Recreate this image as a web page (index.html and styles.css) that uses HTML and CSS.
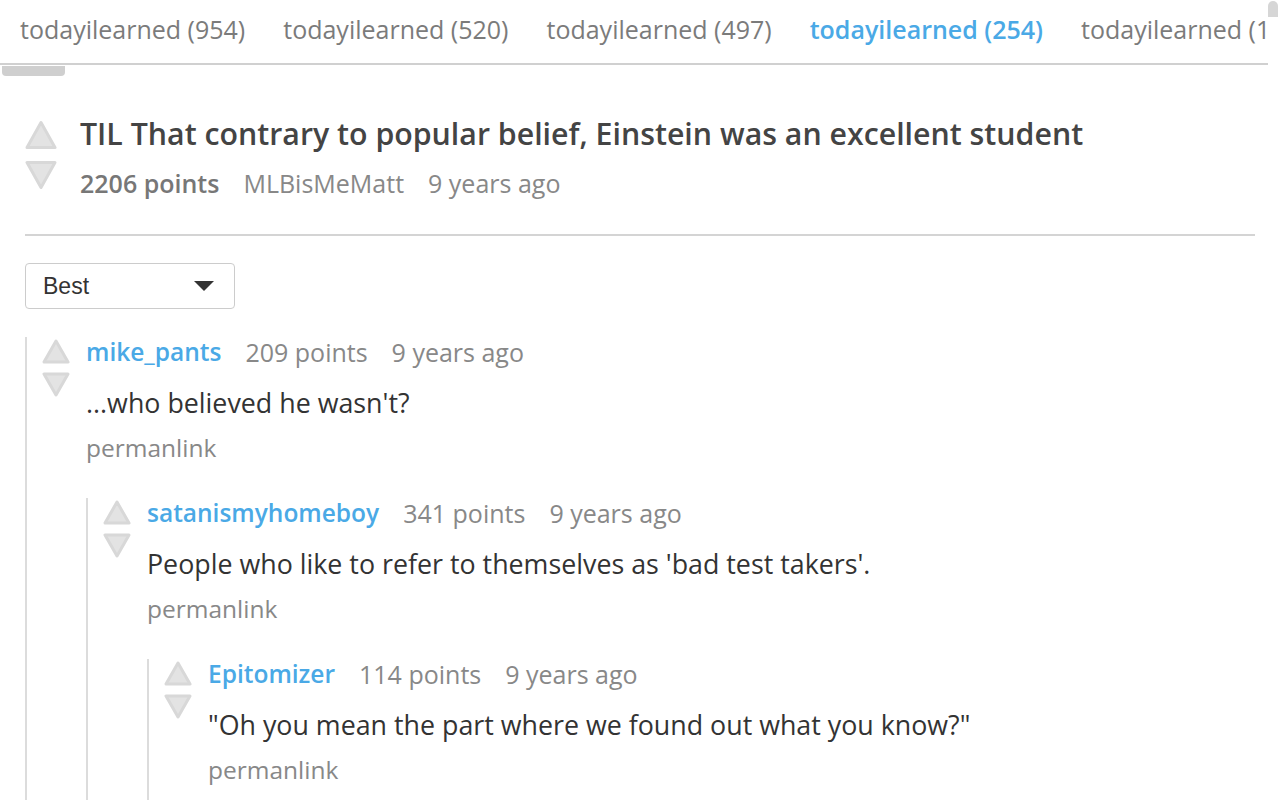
FILE: index.html
```html
<!DOCTYPE html>
<html>
<head>
<meta charset="utf-8">
<link rel="stylesheet" href="styles.css">
</head>
<body>
<div class="page">
  <div class="main">
    <nav class="tabs">
      <span class="tab">todayilearned (954)</span>
      <span class="tab">todayilearned (520)</span>
      <span class="tab">todayilearned (497)</span>
      <span class="tab active">todayilearned (254)</span>
      <span class="tab">todayilearned (154)</span>
    </nav>
    <div class="hscroll"><div class="hthumb"></div></div>

    <div class="content">
      <article class="post">
        <div class="votes post-votes">
          <svg class="arrow" viewBox="0 0 32 30"><polygon points="16,2.5 30,27.5 2,27.5"/></svg>
          <svg class="arrow" viewBox="0 0 32 30"><polygon points="2,2.5 30,2.5 16,27.5"/></svg>
        </div>
        <div class="post-main">
          <h1 class="post-title">TIL That contrary to popular belief, Einstein was an excellent student</h1>
          <div class="post-meta">
            <span class="points">2206 points</span>
            <span>MLBisMeMatt</span>
            <span>9 years ago</span>
          </div>
        </div>
      </article>

      <hr class="divider">

      <div class="sort">
        <span class="sort-label">Best</span>
        <svg class="caret" viewBox="0 0 20 10"><polygon points="0,0 20,0 10,10"/></svg>
      </div>

      <div class="comments">
        <div class="comment">
          <div class="votes">
            <svg class="arrow" viewBox="0 0 28 25"><polygon points="14,2 26,23 2,23"/></svg>
            <svg class="arrow" viewBox="0 0 28 25"><polygon points="2,2 26,2 14,23"/></svg>
          </div>
          <div class="comment-body">
            <div class="comment-head"><span class="author">mike_pants</span><span>209 points</span><span>9 years ago</span></div>
            <p class="comment-text">...who believed he wasn't?</p>
            <a class="permalink">permanlink</a>

            <div class="comment child">
              <div class="votes">
                <svg class="arrow" viewBox="0 0 28 25"><polygon points="14,2 26,23 2,23"/></svg>
                <svg class="arrow" viewBox="0 0 28 25"><polygon points="2,2 26,2 14,23"/></svg>
              </div>
              <div class="comment-body">
                <div class="comment-head"><span class="author">satanismyhomeboy</span><span>341 points</span><span>9 years ago</span></div>
                <p class="comment-text">People who like to refer to themselves as 'bad test takers'.</p>
                <a class="permalink">permanlink</a>

                <div class="comment child">
                  <div class="votes">
                    <svg class="arrow" viewBox="0 0 28 25"><polygon points="14,2 26,23 2,23"/></svg>
                    <svg class="arrow" viewBox="0 0 28 25"><polygon points="2,2 26,2 14,23"/></svg>
                  </div>
                  <div class="comment-body">
                    <div class="comment-head"><span class="author">Epitomizer</span><span>114 points</span><span>9 years ago</span></div>
                    <p class="comment-text">"Oh you mean the part where we found out what you know?"</p>
                    <a class="permalink">permanlink</a>
                  </div>
                </div>
              </div>
            </div>
          </div>
        </div>
      </div>
    </div>
  </div>
  <div class="vscroll"><div class="vthumb"></div></div>
</div>
</body>
</html>
```

FILE: styles.css
```css
html, body {
  margin: 0;
  padding: 0;
  height: 100%;
  overflow: hidden;
  background: #fff;
}
body {
  font-family: "Open Sans", "Noto Sans", sans-serif;
  color: #333;
}
.page {
  display: flex;
  height: 800px;
  overflow: hidden;
}
.main {
  flex: 1;
  min-width: 0;
  overflow: hidden;
}
.vscroll {
  width: 12px;
  flex: none;
}
.vthumb {
  width: 10px;
  height: 16px;
  margin-top: 1px;
  background: #d6d6d6;
  border-radius: 5px 5px 0 0;
}

/* tabs */
.tabs {
  display: flex;
  height: 57px;
  padding-bottom: 6px;
  align-items: center;
  border-bottom: 2px solid #d0d0d0;
  white-space: nowrap;
  overflow: hidden;
  padding-left: 1px;
}
.tab {
  flex: none;
  padding: 0 19px;
  font-size: 25px;
  color: #7b7b7b;
  line-height: 32px;
}
.tab.active {
  color: #4aa9e6;
  font-weight: 600;
}
.hscroll {
  height: 12px;
}
.hthumb {
  width: 63px;
  height: 10px;
  margin: 1px 0 0 2px;
  background: #cfcfcf;
  border-radius: 0 0 4px 4px;
}

.content {
  padding: 0 13px 0 25px;
}

/* post */
.post {
  display: flex;
  margin-top: 38px;
}
.votes {
  display: flex;
  flex-direction: column;
  flex: none;
}
.post-votes {
  width: 32px;
  gap: 10px;
  margin-top: 4px;
  margin-right: 23px;
}
.post-votes .arrow {
  width: 32px;
  height: 30px;
}
.arrow {
  display: block;
}
.arrow polygon {
  fill: #e3e3e3;
  stroke: #d8d8d8;
  stroke-width: 3;
  stroke-linejoin: round;
}
.post-title {
  margin: 0;
  font-size: 30.3px;
  line-height: 36px;
  font-weight: 600;
  color: #444;
}
.post-meta {
  margin-top: 13px;
  display: flex;
  gap: 24px;
  font-size: 25px;
  line-height: 36px;
  color: #888;
}
.post-meta .points {
  font-weight: 600;
  color: #777;
}

.divider {
  border: 0;
  border-top: 2px solid #d4d4d4;
  margin: 33px 0 27px;
}

.sort {
  border: 1px solid #ccc;
  border-radius: 4px;
  display: flex;
  align-items: center;
  justify-content: space-between;
  padding: 0 20px 0 17px;
  box-sizing: border-box;
  width: 210px;
  height: 46px;
}
.sort-label {
  font-family: "Liberation Sans", Arial, sans-serif;
  font-size: 23px;
  color: #333;
}
.caret {
  width: 20px;
  height: 10px;
  fill: #333;
}

/* comments */
.comments {
  margin-top: 28px;
}
.comment {
  display: flex;
  border-left: 2px solid #dcdcdc;
  padding-left: 15px;
  padding-bottom: 40px;
}
.comment .votes {
  width: 28px;
  gap: 8px;
  margin-top: 2px;
  margin-right: 16px;
}
.comment .arrow {
  width: 28px;
  height: 25px;
}
.comment-body {
  flex: 1;
  min-width: 0;
}
.comment-head {
  display: flex;
  gap: 24px;
  font-size: 25px;
  line-height: 30px;
  color: #888;
}
.author {
  color: #4aa9e6;
  font-weight: 600;
  font-size: 24.5px;
}
.comment-text {
  margin: 21px 0 0;
  font-size: 26.8px;
  line-height: 30px;
  color: #333;
}
.permalink {
  display: block;
  margin-top: 15px;
  font-size: 24.5px;
  line-height: 30px;
  color: #888;
}
.comment.child {
  margin-top: 35px;
}
```
